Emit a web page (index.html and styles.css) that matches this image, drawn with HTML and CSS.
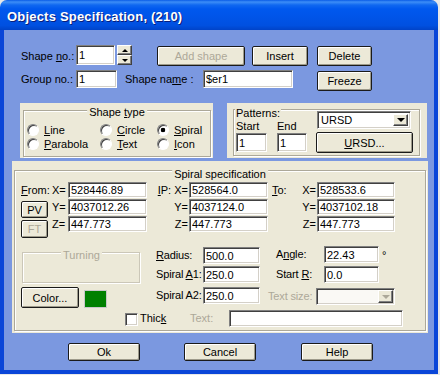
FILE: index.html
```html
<!DOCTYPE html>
<html lang="en">
<head>
    <meta charset="UTF-8">
    <meta name="viewport" content="width=device-width, initial-scale=1.0">
    <title>Objects Specification</title>
    <link rel="stylesheet" href="styles.css">
</head>
<body>
    <div class="window">
        <div class="titlebar"><span class="title">Objects Specification, (210)</span></div>
        <div class="client">
            <!-- Shape number / buttons -->
            <div class="row row-a">
                <span class="lbl lbl-no">Shape <u>n</u>o.:</span>
                <input class="edit edit-no" type="text" value="1">
                <div class="spin"><span class="spin-btn up"></span><span class="spin-btn down"></span></div>
                <button class="btn btn-add" disabled>Add shape</button>
                <button class="btn btn-insert">Insert</button>
                <button class="btn btn-delete">Delete</button>
            </div>
            <div class="row row-b">
                <span class="lbl lbl-group">Group no.:</span>
                <input class="edit edit-group" type="text" value="1">
                <span class="lbl lbl-name">Shape na<u>m</u>e :</span>
                <input class="edit edit-name" type="text" value="$er1">
                <button class="btn btn-freeze">Freeze</button>
            </div>

            <!-- Shape type + patterns -->
            <div class="row row-c">
                <div class="panel shape-panel">
                    <div class="group">
                        <span class="group-title title-center shape-title">Shape <u>t</u>ype</span>
                        <div class="radios">
                            <label class="opt"><input class="radio" type="radio" name="shape"><span><u>L</u>ine</span></label>
                            <label class="opt"><input class="radio" type="radio" name="shape"><span><u>C</u>ircle</span></label>
                            <label class="opt"><input class="radio" type="radio" name="shape" checked><span><u>S</u>piral</span></label>
                            <label class="opt"><input class="radio" type="radio" name="shape"><span><u>P</u>arabola</span></label>
                            <label class="opt"><input class="radio" type="radio" name="shape"><span><u>T</u>ext</span></label>
                            <label class="opt"><input class="radio" type="radio" name="shape"><span><u>I</u>con</span></label>
                        </div>
                    </div>
                </div>
                <div class="panel patterns-panel">
                    <div class="group">
                        <span class="group-title pat-title">Patterns:</span>
                        <div class="pat-body">
                            <div class="pat-left">
                                <div class="pat-col">
                                    <span class="pat-lbl">Start</span>
                                    <input class="edit edit-start" type="text" value="1">
                                </div>
                                <div class="pat-col">
                                    <span class="pat-lbl">End</span>
                                    <input class="edit edit-end" type="text" value="1">
                                </div>
                            </div>
                            <div class="pat-right">
                                <div class="combo combo-ursd"><span class="combo-text">URSD</span><span class="combo-btn"></span></div>
                                <button class="btn btn-ursd"><u>U</u>RSD...</button>
                            </div>
                        </div>
                    </div>
                </div>
            </div>

            <!-- Spiral specification -->
            <div class="panel spiral-panel">
                <div class="group spiral-group">
                    <span class="group-title title-center spiral-title">Spiral specification</span>
                    <div class="coords">
                        <span class="cl"><u>F</u>rom:</span>
                        <span class="cl">X=</span>
                        <input class="edit" type="text" value="528446.89">
                        <span class="cl cl-right"><u>I</u>P: X=</span>
                        <input class="edit" type="text" value="528564.0">
                        <span class="cl cl-split"><span><u>T</u>o:</span><span>X=</span></span>
                        <input class="edit" type="text" value="528533.6">

                        <button class="btn btn-pv">PV</button>
                        <span class="cl">Y=</span>
                        <input class="edit" type="text" value="4037012.26">
                        <span class="cl cl-right">Y=</span>
                        <input class="edit" type="text" value="4037124.0">
                        <span class="cl cl-right">Y=</span>
                        <input class="edit" type="text" value="4037102.18">

                        <button class="btn btn-ft" disabled>FT</button>
                        <span class="cl">Z=</span>
                        <input class="edit" type="text" value="447.773">
                        <span class="cl cl-right">Z=</span>
                        <input class="edit" type="text" value="447.773">
                        <span class="cl cl-right">Z=</span>
                        <input class="edit" type="text" value="447.773">
                    </div>

                    <div class="lower">
                        <div class="lower-left">
                            <div class="group turning">
                                <span class="group-title turning-title">Turning</span>
                            </div>
                            <div class="color-row">
                                <button class="btn btn-color">Color...</button>
                                <span class="swatch"></span>
                            </div>
                        </div>
                        <div class="lower-mid">
                            <div class="field f1"><span class="fl"><u>R</u>adius:</span><input class="edit" type="text" value="500.0"></div>
                            <div class="field f2"><span class="fl">Spiral <u>A</u>1:</span><input class="edit" type="text" value="250.0"></div>
                            <div class="field f3"><span class="fl">Spiral A2:</span><input class="edit" type="text" value="250.0"></div>
                        </div>
                        <div class="lower-right">
                            <div class="field g1"><span class="fl fl-wide">A<u>n</u>gle:</span><input class="edit" type="text" value="22.43"><span class="deg">°</span></div>
                            <div class="field g2"><span class="fl fl-wide">Start <u>R</u>:</span><input class="edit" type="text" value="0.0"></div>
                            <div class="field g3">
                                <span class="fl fl-wide muted">Text size:</span>
                                <div class="combo combo-size disabled"><span class="combo-text"></span><span class="combo-btn"></span></div>
                            </div>
                        </div>
                    </div>

                    <div class="bottom-row">
                        <input class="check" type="checkbox">
                        <span class="lbl-thick">Thic<u>k</u></span>
                        <span class="lbl-text muted">Text:</span>
                        <input class="edit edit-text" type="text" value="">
                    </div>
                </div>
            </div>

            <!-- Dialog buttons -->
            <div class="row row-buttons">
                <button class="btn btn-dlg btn-ok">Ok</button>
                <button class="btn btn-dlg btn-cancel">Cancel</button>
                <button class="btn btn-dlg btn-help">Help</button>
            </div>
        </div>
    </div>
</body>
</html>
```

FILE: styles.css
```css
* {
    box-sizing: border-box;
}

body {
    margin: 0;
    background-color: #e8e8e8;
    font-family: "Liberation Sans", Arial, sans-serif;
    font-size: 11px;
    color: #000;
}

u {
    text-decoration: underline;
    text-underline-offset: 1px;
}

.window {
    width: 438px;
    height: 374px;
    display: flex;
    flex-direction: column;
}

.titlebar {
    height: 30px;
    border-radius: 7px 7px 0 0;
    background: linear-gradient(#0a5ce6 0, #3d8ef7 2px, #1068f0 5px, #0058ee 9px, #0055ea 50%, #0050e0 85%, #0043c8 100%);
    display: flex;
    align-items: center;
    padding: 2px 0 0 7px;
}

.title {
    color: #fff;
    font-weight: bold;
    font-size: 13px;
    letter-spacing: 0.2px;
    text-shadow: 1px 1px #0a1e7a;
}

.client {
    flex: 1;
    background-color: #7b98e0;
    border: 4px solid #0a46d8;
    border-top: 0;
    padding-top: 15px;
}

.row {
    display: flex;
    align-items: flex-start;
}

.muted {
    color: #aca899;
}

/* Classic controls */
.edit {
    font: inherit;
    color: #000;
    background-color: #fff;
    border: 1px solid;
    border-color: #808080 #fff #fff #808080;
    box-shadow: inset 1px 1px #404040, inset -1px -1px #d4d0c8;
    padding: 0 2px;
    outline: none;
    margin: 0;
}

.btn {
    font: inherit;
    color: #000;
    background-color: #ece9d8;
    border: 1px solid #1a1a1a;
    border-radius: 2px;
    box-shadow: inset 1px 1px #fff, inset -1px -1px #9d9a8a;
    padding: 0;
    margin: 0;
}

.btn:disabled {
    color: #aca899;
}

.combo {
    display: flex;
    background-color: #fff;
    border: 1px solid;
    border-color: #808080 #fff #fff #808080;
    box-shadow: inset 1px 1px #404040, inset -1px -1px #d4d0c8;
    padding: 2px;
}

.combo-text {
    flex: 1;
    padding-left: 1px;
    line-height: 13px;
}

.combo-btn {
    width: 15px;
    background-color: #ece9d8;
    border: 1px solid;
    border-color: #fff #404040 #404040 #fff;
    box-shadow: inset -1px -1px #808080;
    display: flex;
    align-items: center;
    justify-content: center;
}

.combo-btn::after {
    content: "";
    border-left: 4px solid transparent;
    border-right: 4px solid transparent;
    border-top: 4px solid #000;
}

.combo.disabled {
    background-color: #faf9f5;
}

.combo.disabled .combo-btn::after {
    border-top-color: #aca899;
}

.radio {
    appearance: none;
    margin: 0;
    width: 12px;
    height: 12px;
    border-radius: 50%;
    background-color: #fff;
    border: 1px solid;
    border-color: #808080 #fff #fff #808080;
    box-shadow: inset 1px 1px #404040;
}

.radio:checked {
    background: radial-gradient(circle, #000 0 2px, #fff 2.6px);
}

.check {
    appearance: none;
    margin: 0;
    width: 13px;
    height: 13px;
    background-color: #fff;
    border: 1px solid;
    border-color: #808080 #fff #fff #808080;
    box-shadow: inset 1px 1px #404040, inset -1px -1px #d4d0c8;
}

.panel {
    background-color: #ece9d8;
}

.group {
    position: relative;
    height: 100%;
    border: 1px solid #aca899;
    box-shadow: inset 1px 1px #fff, 1px 1px #fff;
}

.group-title {
    position: absolute;
    background-color: #ece9d8;
    padding: 0 2px;
    line-height: 13px;
    white-space: nowrap;
}

.title-center {
    left: 50%;
    transform: translateX(-50%);
}

/* Row A */
.row-a {
    height: 20px;
}

.lbl {
    line-height: 23px;
}

.lbl-no {
    margin-left: 17px;
    width: 55px;
}

.edit-no {
    width: 39px;
    height: 20px;
}

.spin {
    margin-left: 2px;
    width: 15px;
    height: 20px;
    display: flex;
    flex-direction: column;
}

.spin-btn {
    flex: 1;
    background-color: #ece9d8;
    border: 1px solid;
    border-color: #fff #404040 #404040 #fff;
    box-shadow: inset -1px -1px #808080;
    display: flex;
    align-items: center;
    justify-content: center;
}

.spin-btn.up::after {
    content: "";
    border-left: 3px solid transparent;
    border-right: 3px solid transparent;
    border-bottom: 3px solid #000;
}

.spin-btn.down::after {
    content: "";
    border-left: 3px solid transparent;
    border-right: 3px solid transparent;
    border-top: 3px solid #000;
}

.btn-add {
    margin: 1px 0 0 25px;
    width: 88px;
    height: 20px;
}

.btn-insert {
    margin: 1px 0 0 7px;
    width: 56px;
    height: 20px;
}

.btn-delete {
    margin: 1px 0 0 9px;
    width: 55px;
    height: 20px;
}

/* Row B */
.row-b {
    margin-top: 5px;
    height: 20px;
}

.row-b .lbl {
    line-height: 19px;
}

.lbl-group {
    margin-left: 17px;
    width: 55px;
}

.edit-group {
    width: 41px;
    height: 18px;
}

.lbl-name {
    margin-left: 8px;
    width: 78px;
}

.edit-name {
    width: 90px;
    height: 18px;
}

.btn-freeze {
    margin: 1px 0 0 24px;
    width: 55px;
    height: 20px;
}

/* Row C */
.row-c {
    margin-top: 13px;
    height: 55px;
}

.shape-panel {
    margin-left: 16px;
    width: 193px;
    height: 55px;
    padding: 7px 2px 1px 3px;
}

.shape-title {
    top: -5px;
}

.radios {
    display: grid;
    grid-template-columns: 73px 57px auto;
    grid-auto-rows: 14px;
    padding: 12px 0 0 3px;
}

.opt {
    display: flex;
    align-items: center;
    gap: 5px;
}

.patterns-panel {
    margin-left: 14px;
    width: 200px;
    height: 55px;
    padding: 6px 7px 2px 6px;
}

.pat-title {
    left: 1px;
    top: -3px;
    padding: 0 1px;
}

.pat-body {
    display: flex;
    padding: 1px 0 0 2px;
}

.pat-left {
    display: flex;
    gap: 10px;
    margin-top: 9px;
}

.pat-col {
    display: flex;
    flex-direction: column;
}

.pat-lbl {
    line-height: 13px;
}

.edit-start {
    width: 31px;
    height: 19px;
}

.edit-end {
    width: 30px;
    height: 19px;
}

.pat-right {
    margin-left: 9px;
}

.combo-ursd {
    margin-left: 1px;
    width: 94px;
    height: 18px;
}

.btn-ursd {
    display: block;
    margin-top: 3px;
    width: 97px;
    height: 21px;
}

/* Spiral specification */
.spiral-panel {
    margin: 3px 0 0 8px;
    width: 416px;
    height: 172px;
    padding: 9px 2px 2px 2px;
}

.spiral-title {
    top: -3px;
}

.coords {
    display: grid;
    grid-template-columns: 31px 16px 79px 42px 79px 49px 78px;
    grid-template-rows: 16px 16px 16px;
    row-gap: 1px;
    margin: 11px 0 0 6px;
}

.coords .edit {
    width: 100%;
    height: 16px;
}

.cl {
    line-height: 16px;
    white-space: nowrap;
}

.cl-right {
    text-align: right;
    padding-right: 1px;
}

.cl-split {
    display: flex;
    justify-content: space-between;
    padding: 0 1px 0 4px;
}

.btn-pv {
    margin-top: 2px;
    width: 27px;
    height: 17px;
}

.btn-ft {
    margin-top: 4px;
    width: 27px;
    height: 18px;
}

.lower {
    display: flex;
    align-items: flex-start;
    margin: 14px 0 0 6px;
}

.lower-left {
    width: 135px;
}

.turning {
    margin: 6px 0 0 1px;
    width: 118px;
    height: 31px;
    border-color: #cbc7b8;
}

.turning-title {
    left: 38px;
    top: -4px;
    color: #aca899;
}

.color-row {
    display: flex;
    margin-top: 4px;
}

.btn-color {
    width: 58px;
    height: 21px;
}

.swatch {
    margin: 3px 0 0 5px;
    width: 23px;
    height: 18px;
    background-color: #008000;
    border: 1px solid #c8c8c8;
}

.lower-mid {
    width: 104px;
}

.field {
    display: flex;
    align-items: flex-start;
}

.field .edit {
    height: 17px;
}

.fl {
    width: 47px;
    line-height: 17px;
    white-space: nowrap;
    letter-spacing: -0.15px;
}

.fl-wide {
    width: 48px;
}

.f1 {
    margin-top: 1px;
}

.f2 {
    margin-top: 2px;
}

.f3 {
    margin-top: 4px;
}

.lower-mid .edit {
    width: 57px;
}

.lower-right {
    margin-left: 16px;
}

.lower-right .edit {
    width: 55px;
}

.g2 {
    margin-top: 3px;
}

.g3 {
    margin: 5px 0 0 -8px;
}

.deg {
    margin: 4px 0 0 3px;
    line-height: 11px;
}

.combo-size {
    width: 79px;
    height: 17px;
    padding: 1px;
}

.bottom-row {
    display: flex;
    align-items: flex-start;
    margin: 2px 0 0 6px;
}

.check {
    margin: 3px 0 0 104px;
}

.lbl-thick {
    margin-left: 2px;
    width: 50px;
    line-height: 17px;
}

.lbl-text {
    width: 39px;
    line-height: 17px;
}

.edit-text {
    width: 174px;
    height: 17px;
}

/* Dialog buttons */
.row-buttons {
    margin-top: 10px;
}

.btn-dlg {
    width: 72px;
    height: 18px;
}

.btn-ok {
    margin-left: 64px;
}

.btn-cancel {
    margin-left: 44px;
}

.btn-help {
    margin-left: 45px;
}
```
